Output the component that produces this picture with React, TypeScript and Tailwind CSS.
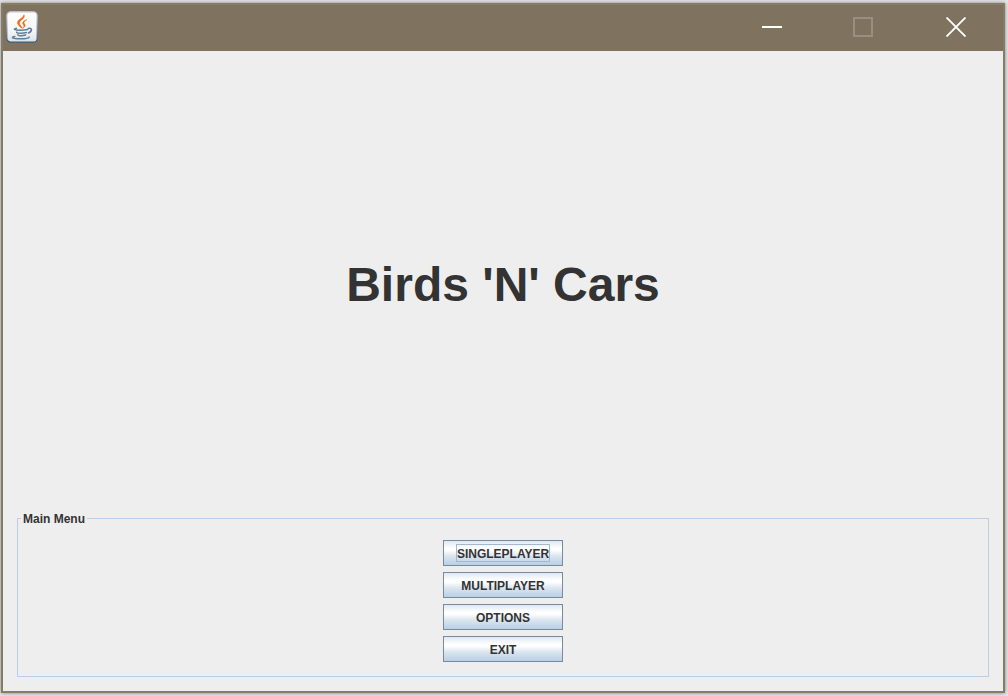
import React from "react";

const menuItems = ["SINGLEPLAYER", "MULTIPLAYER", "OPTIONS", "EXIT"];

function JavaIcon() {
  return (
    <svg viewBox="0 0 32 32" className="size-8" aria-hidden="true">
      <defs>
        <linearGradient id="tile" x1="0" y1="0" x2="0" y2="1">
          <stop offset="0" stopColor="#ffffff" />
          <stop offset="0.6" stopColor="#f6f6f6" />
          <stop offset="1" stopColor="#dde1e4" />
        </linearGradient>
        <linearGradient id="rim" x1="0" y1="0" x2="0" y2="1">
          <stop offset="0" stopColor="#c9ccce" />
          <stop offset="1" stopColor="#35566f" />
        </linearGradient>
      </defs>
      <rect x="0.8" y="0.8" width="30.4" height="30.4" rx="4" fill="url(#tile)" stroke="url(#rim)" strokeWidth="1.2" />
      <g fill="#e8701a" stroke="#e8701a" strokeWidth="0.6" strokeLinejoin="round">
        <path d="M18 3.800c1.200 2.700-1.400 4.300-3.300 6-1.500 1.400-1.500 2.700-.3 4.500l2 3c-3.600-2-5.900-4.700-4.400-7.300 1.400-2.300 5.600-3.300 6-6.200z" />
        <path d="M20.900 8.600c-3 1.200-5.400 2.700-3.600 5 1 1.400.8 2.500-.6 3.600 3.300-1.500 2.700-3.200 1.500-4.600-.9-1.500.7-2.700 2.700-4z" />
      </g>
      <g fill="none" stroke="#5a819c" strokeLinecap="round">
        <path d="M10.500 17.200c-3 .6-3 1.400-.2 1.800 3.600.5 8.400.3 11.400-.4" strokeWidth="1.500" />
        <path d="M22.200 17.600c3.800-1.400 4.700 2.300.2 4.400" strokeWidth="1.600" />
        <path d="M10.800 21.100c-.8 1.200 5 1.700 9.600.5" strokeWidth="1.500" />
        <path d="M11.900 23.600c-.5 1.300 4.100 1.500 7.700.4" strokeWidth="1.500" />
        <path d="M8.800 25.500c-3.800.8-3 1.900 2.500 2.200 4.800.3 10.800-.1 11.900-1.600" strokeWidth="1.500" />
      </g>
    </svg>
  );
}

function TitleBar() {
  return (
    <header className="flex h-[46px] items-center bg-[#7f735f] pb-0.5 pl-[3px]">
      <JavaIcon />
      <div className="ml-auto flex h-full">
        <button type="button" aria-label="Minimize" className="flex w-[90px] items-center justify-center">
          <svg viewBox="0 0 20 20" className="size-5" shapeRendering="crispEdges">
            <path d="M0 9h20v2H0z" fill="#fff" />
          </svg>
        </button>
        <button type="button" aria-label="Maximize" disabled className="flex w-[92px] items-center justify-center">
          <svg viewBox="0 0 20 20" className="size-5" shapeRendering="crispEdges">
            <path d="M1 1h18v18H1z" fill="none" stroke="#998f7f" strokeWidth="2" />
          </svg>
        </button>
        <button type="button" aria-label="Close" className="flex w-[94px] items-center justify-center">
          <svg viewBox="0 0 20 20" className="size-5">
            <path d="M.5.5l19 19M19.500.5l-19 19" fill="none" stroke="#fff" strokeWidth="1.900" />
          </svg>
        </button>
      </div>
    </header>
  );
}

function MenuButton({ label, focused }: { label: string; focused: boolean }) {
  return (
    <button
      type="button"
      className="flex h-[26px] w-[120px] items-center justify-center border border-[#7a8a99] bg-[linear-gradient(to_bottom,#dde8f3_0%,#ffffff_30%,#ffffff_38%,#dbe6f0_62%,#b8cfe5_100%)]"
    >
      <span className={focused ? "border border-[#a3b8cc] pt-0.5" : "border border-transparent pt-0.5"}>{label}</span>
    </button>
  );
}

export default function App() {
  return (
    <div className="flex min-h-screen flex-col bg-[#e6e6e6] pt-[3px] pr-[3px] pb-[3px] pl-px font-['Liberation_Sans',Arial,sans-serif] text-[#333333]">
      <div className="flex flex-1 flex-col border-2 border-[#867b66] bg-[#eeeeee] shadow-[0_0_4px_rgba(0,0,0,0.45)]">
        <TitleBar />
        <main className="flex flex-1 flex-col">
          <div className="flex flex-1 items-center justify-center pt-2">
            <h1 className="text-5xl font-bold">Birds &apos;N&apos; Cars</h1>
          </div>
          <fieldset className="mx-3.5 mb-3.5 border border-[#b8cfe5] px-[3px] pb-3.5 text-xs leading-[14px] font-bold">
            <legend className="px-[2px] pt-0.5">Main Menu</legend>
            <div className="flex flex-col items-center gap-1.5 pt-3.5">
              {menuItems.map((label, index) => (
                <MenuButton key={label} label={label} focused={index === 0} />
              ))}
            </div>
          </fieldset>
        </main>
      </div>
    </div>
  );
}
